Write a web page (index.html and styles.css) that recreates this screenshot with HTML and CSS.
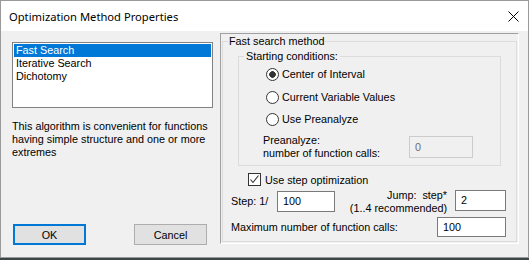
FILE: index.html
```html
<!DOCTYPE html>
<html>
<head>
<meta charset="utf-8">
<title>Optimization Method Properties</title>
<link rel="stylesheet" href="styles.css">
</head>
<body>
<div class="window">
  <div class="titlebar">
    <span class="title">Optimization Method Properties</span>
    <svg class="close" width="11" height="11" viewBox="0 0 11 11"><path d="M0.5 0.5 L10.5 10.5 M10.5 0.5 L0.5 10.5" stroke="#000" stroke-width="1" fill="none"/></svg>
  </div>
  <div class="client">
    <div class="left">
      <ul class="listbox">
        <li class="sel">Fast Search</li>
        <li>Iterative Search</li>
        <li>Dichotomy</li>
      </ul>
      <p class="desc">This algorithm is convenient for functions<br>having simple structure and one or more<br>extremes</p>
      <div class="buttons">
        <button class="btn default">OK</button>
        <button class="btn">Cancel</button>
      </div>
    </div>
    <div class="panel">
      <fieldset class="group outer">
        <legend>Fast search method</legend>
        <fieldset class="group inner">
          <legend>Starting conditions:</legend>
          <div class="radios">
            <label class="radio r1"><span class="rb checked"></span>Center of Interval</label>
            <label class="radio r2"><span class="rb"></span>Current Variable Values</label>
            <label class="radio r3"><span class="rb"></span>Use Preanalyze</label>
          </div>
          <div class="pre">
            <span class="prelabel">Preanalyze:<br>number of function calls:</span>
            <span class="edit disabled">0</span>
          </div>
        </fieldset>
        <label class="check"><span class="cb"><svg width="11" height="11" viewBox="0 0 11 11"><path d="M1.5 5.5 L4 8.5 L9.5 1.5" stroke="#333" stroke-width="1.1" fill="none"/></svg></span>Use step optimization</label>
        <div class="steprow">
          <span class="steplabel">Step: 1/</span>
          <span class="edit stepbox">100</span>
          <span class="jump">Jump:&nbsp; step*<br>(1..4 recommended)</span>
          <span class="edit jumpbox">2</span>
        </div>
        <div class="maxrow">
          <span>Maximum number of function calls:</span>
          <span class="edit maxbox">100</span>
        </div>
      </fieldset>
    </div>
  </div>
</div>
</body>
</html>
```
FILE: styles.css
```css
html, body {
  margin: 0;
  padding: 0;
}
body {
  background: #3b4646;
  font-family: "Liberation Sans", Arial, sans-serif;
  font-size: 10.8px;
  color: #000;
  width: 529px;
  height: 260px;
  overflow: hidden;
}
.window {
  width: 529px;
  height: 258px;
  box-sizing: border-box;
  border: 1px solid #9a9a9a;
  background: #f0f0f0;
  display: flex;
  flex-direction: column;
}
.titlebar {
  height: 30px;
  flex: none;
  background: #fff;
  display: flex;
  align-items: center;
  justify-content: space-between;
  padding: 0 9px 0 8px;
}
.title {
  font-family: "Noto Sans", "Open Sans", sans-serif;
  font-size: 11.2px;
  color: #000;
}
.close {
  display: block;
}
.client {
  flex: 1;
  display: flex;
  align-items: flex-start;
  padding: 2px 0 0 11px;
  gap: 7px;
}
.left {
  width: 201px;
  height: 203px;
  margin-top: 9px;
  display: flex;
  flex-direction: column;
}
.listbox {
  list-style: none;
  margin: 0;
  padding: 1px;
  width: 201px;
  height: 66px;
  box-sizing: border-box;
  border: 1px solid #828282;
  background: #fff;
}
.listbox li {
  height: 13px;
  line-height: 13px;
  padding-left: 2px;
  white-space: nowrap;
}
.listbox li.sel {
  background: #0078d7;
  color: #fff;
}
.desc {
  margin: 12px 0 0;
  line-height: 13px;
  white-space: nowrap;
}
.buttons {
  margin-top: auto;
  display: flex;
  justify-content: space-between;
  padding: 0 6px 0 1px;
}
.btn {
  width: 73px;
  height: 21px;
  box-sizing: border-box;
  border: 1px solid #adadad;
  background: #e1e1e1;
  font-family: "Liberation Sans", Arial, sans-serif;
  font-size: 10.8px;
  color: #000;
  padding: 0;
  margin: 0;
}
.btn.default {
  border: 2px solid #0078d7;
}
.panel {
  width: 299px;
  height: 211px;
  box-sizing: border-box;
  border-top: 1px solid #a0a0a0;
  border-left: 1px solid #a0a0a0;
  border-right: 1px solid #fff;
  border-bottom: 1px solid #fff;
  padding: 1px 1px 0 1px;
}
.group {
  border: 1px solid #dcdcdc;
  margin: 0;
  padding: 0;
  min-width: 0;
}
.group > legend {
  margin-left: 5px;
  padding: 0 1px;
  line-height: 13px;
  height: 13px;
}
.outer {
  height: 207px;
  box-sizing: border-box;
  display: flex;
  flex-direction: column;
}
.inner {
  margin: 2px 15px 0 15px;
  padding-bottom: 5px;
}
.inner > legend {
  padding: 0 2px;
}
.radios {
  display: flex;
  flex-direction: column;
  padding-left: 27px;
  padding-top: 1px;
}
.radio {
  display: flex;
  align-items: center;
  height: 20px;
}
.r2 {
  margin-top: 3px;
}
.r3 {
  margin-top: 2px;
}
.rb {
  width: 13px;
  height: 13px;
  box-sizing: border-box;
  border: 1px solid #333;
  border-radius: 50%;
  background: #fff;
  margin-right: 3px;
  flex: none;
}
.rb.checked {
  background: radial-gradient(circle at center, #333 0, #333 3px, #fff 3.6px);
}
.pre {
  display: flex;
  align-items: center;
  padding-left: 24px;
  margin-top: 5px;
  height: 26px;
}
.prelabel {
  width: 146px;
  line-height: 13px;
  white-space: nowrap;
}
.edit {
  box-sizing: border-box;
  border: 1px solid #7a7a7a;
  background: #fff;
  padding-left: 5px;
  height: 21px;
  line-height: 19px;
  flex: none;
}
.edit.disabled {
  width: 64px;
  height: 22px;
  line-height: 20px;
  border-color: #cccccc;
  background: #f0f0f0;
  color: #6d6d6d;
}
.check {
  display: flex;
  align-items: center;
  height: 19px;
  margin-top: 4px;
  padding-left: 25px;
}
.cb {
  width: 13px;
  height: 13px;
  box-sizing: border-box;
  border: 1px solid #333;
  background: #fff;
  margin-right: 4px;
  flex: none;
  display: flex;
}
.cb svg {
  display: block;
}
.steprow {
  display: flex;
  align-items: flex-start;
  height: 26px;
  padding: 0 10px 0 8px;
}
.steplabel {
  width: 46px;
  flex: none;
  line-height: 13px;
  margin-top: 6px;
}
.stepbox {
  width: 58px;
  margin-top: 2px;
}
.jump {
  flex: 1;
  text-align: right;
  line-height: 13px;
  white-space: nowrap;
  margin-right: 8px;
}
.jumpbox {
  width: 51px;
  margin-top: 1px;
}
.maxrow {
  display: flex;
  align-items: center;
  justify-content: space-between;
  height: 24px;
  padding: 0 10px 0 8px;
}
.maxbox {
  width: 69px;
  height: 20px;
  line-height: 18px;
}
```
